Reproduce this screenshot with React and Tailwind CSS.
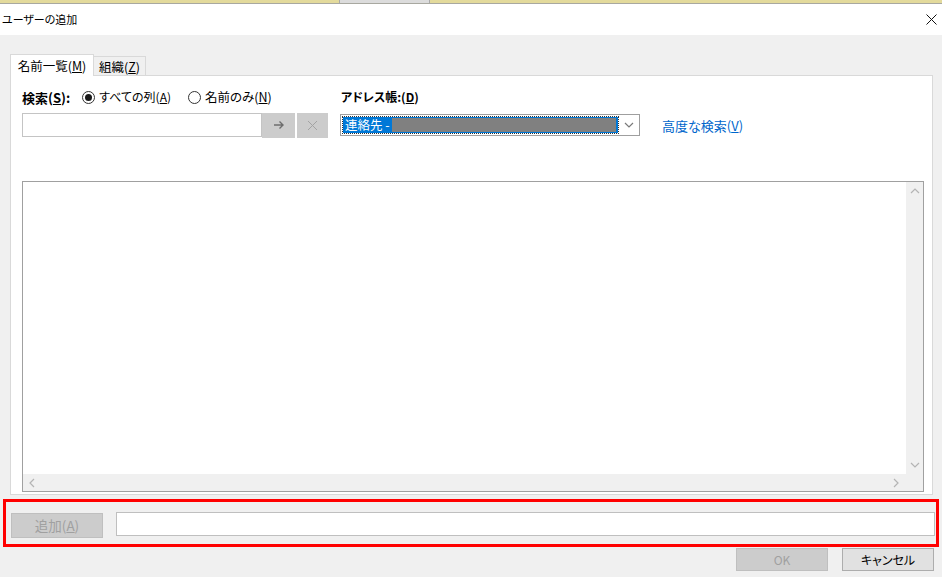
import React from "react";

const font = {
  fontFamily: '"Noto Sans CJK JP", "Noto Sans", sans-serif',
};

const Radio = ({ checked }) => (
  <span className="w-[13px] h-[13px] rounded-full border border-[#333] bg-white flex items-center justify-center">
    {checked && <span className="w-[7px] h-[7px] rounded-full bg-[#1a1a1a]"></span>}
  </span>
);

const Chevron = ({ d, className }) => (
  <svg className={className} width="10" height="10" viewBox="0 0 10 10" fill="none" stroke="currentColor" strokeWidth="1.2">
    <path d={d} />
  </svg>
);

const App = () => {
  return (
    <div
      className="w-[942px] h-[577px] bg-[#f0f0f0] overflow-hidden text-[12px] text-black [font-feature-settings:'palt'] leading-none"
      style={font}
    >
      {/* window strip above */}
      <div className="flex h-[3px] bg-[#e3da9c]">
        <div className="ml-[339px] w-[91px] bg-[#dcdcdc] border-x border-[#a9a9a9]"></div>
      </div>
      <div className="h-[1px] bg-[#a8a8a0]"></div>

      {/* title bar */}
      <div className="h-[31px] bg-white flex items-center justify-between pl-[2px] pr-[4px]">
        <span className="text-[11px]">ユーザーの追加</span>
        <svg width="11" height="11" viewBox="0 0 11 11" stroke="#111" strokeWidth="1" className="mr-[1px]">
          <path d="M0.5 0.5L10.5 10.5M10.5 0.5L0.5 10.5" />
        </svg>
      </div>

      {/* tabs */}
      <div className="flex items-end ml-[10px] mt-[18px] h-[22px]">
        <div className="w-[84px] h-[22px] bg-white border-l border-t border-r border-[#d9d9d9] flex items-center justify-center pt-[1px] relative z-10 -mb-[1px] text-[12.5px] whitespace-nowrap">
          名前一覧(<span className="underline">M</span>)
        </div>
        <div className="w-[52px] h-[19px] bg-[#f0f0f0] border-t border-r border-[#d9d9d9] flex items-center justify-center pt-[3px] text-[12.5px] whitespace-nowrap">
          組織(<span className="underline">Z</span>)
        </div>
      </div>

      {/* tab page */}
      <div className="ml-[10px] w-[923px] h-[420px] bg-white border border-[#d9d9d9] pl-[11px] pt-[13px]">
        <div className="flex items-center h-[16px]">
          <div className="w-[319px] flex items-center">
            <span className="font-bold text-[13px]">
              検索(<span className="underline">S</span>):
            </span>
            <span className="ml-[12px]">
              <Radio checked />
            </span>
            <span className="ml-[4px]">
              すべての列(<span className="underline">A</span>)
            </span>
            <span className="ml-[17px]">
              <Radio />
            </span>
            <span className="ml-[4px] text-[12.5px]">
              名前のみ(<span className="underline">N</span>)
            </span>
          </div>
          <span className="font-bold">
            アドレス帳:(<span className="underline">D</span>)
          </span>
        </div>

        <div className="flex items-center mt-[8px] h-[24px]">
          <div className="w-[240px] h-[24px] bg-white border border-[#c4c4c4]"></div>
          <div className="w-[33px] h-[25px] bg-[#cccccc] flex items-center justify-center text-[#6d6d6d]">
            <svg width="12" height="10" viewBox="0 0 12 10" fill="none" stroke="currentColor" strokeWidth="1.4">
              <path d="M1 5H10M6.5 1.5L10 5L6.5 8.5" />
            </svg>
          </div>
          <div className="ml-[2px] w-[31px] h-[25px] bg-[#cccccc] flex items-center justify-center text-[#a3a3a3]">
            <svg width="11" height="11" viewBox="0 0 11 11" fill="none" stroke="currentColor" strokeWidth="1">
              <path d="M1 1L10 10M10 1L1 10" />
            </svg>
          </div>
          <div className="ml-[12px] w-[300px] h-[22px] bg-white border border-[#9f9f9f] flex items-center pl-[2px]">
            <div className="w-[275px] h-[16px] bg-[#0078d7] outline outline-1 outline-dotted outline-[#333] flex items-center pl-[2px] pr-[2px] text-white">
              <span className="text-[12.5px] whitespace-nowrap">連絡先 -</span>
              <div className="ml-[2px] flex-1 h-[14px] bg-[#808080]"></div>
            </div>
            <div className="flex-1 flex items-center justify-center text-[#7a7a7a]">
              <Chevron d="M1 3L5 7L9 3" />
            </div>
          </div>
          <span className="ml-[22px] text-[#0066cc] text-[13px]">
            高度な検索(<span className="underline">V</span>)
          </span>
        </div>

        {/* list */}
        <div className="mt-[44px] w-[902px] h-[311px] border border-[#a0a0a0] flex flex-col">
          <div className="flex flex-1">
            <div className="flex-1 bg-white"></div>
            <div className="w-[17px] bg-[#f0f0f0] flex flex-col items-center justify-between py-[4px] text-[#b4b4b4]">
              <Chevron d="M1 7L5 3L9 7" />
              <Chevron d="M1 3L5 7L9 3" />
            </div>
          </div>
          <div className="h-[17px] bg-[#f0f0f0] flex items-center justify-between pl-[4px] pr-[22px] text-[#b4b4b4]">
            <Chevron d="M7 1L3 5L7 9" />
            <Chevron d="M3 1L7 5L3 9" />
          </div>
        </div>
      </div>

      {/* highlighted row */}
      <div className="ml-[3px] mt-[4px] w-[936px] h-[48px] border-[3px] border-[#ff0000] flex items-start pt-[10px]">
        <div className="ml-[5px] mt-[1px] w-[92px] h-[25px] bg-[#cccccc] border border-[#bfbfbf] flex items-center justify-center text-[#a0a0a0] text-[13.5px]">
          追加(<span className="underline">A</span>)
        </div>
        <div className="ml-[13px] w-[819px] h-[24px] bg-white border border-[#bfbfbf]"></div>
      </div>

      {/* dialog buttons */}
      <div className="flex mt-[1px] ml-[736px]">
        <div className="w-[92px] h-[23px] bg-[#cccccc] border border-[#bfbfbf] flex items-center justify-center text-[#a0a0a0]">
          OK
        </div>
        <div className="ml-[14px] w-[92px] h-[23px] bg-[#e1e1e1] border border-[#adadad] flex items-center justify-center">
          キャンセル
        </div>
      </div>
    </div>
  );
};

export default App;
